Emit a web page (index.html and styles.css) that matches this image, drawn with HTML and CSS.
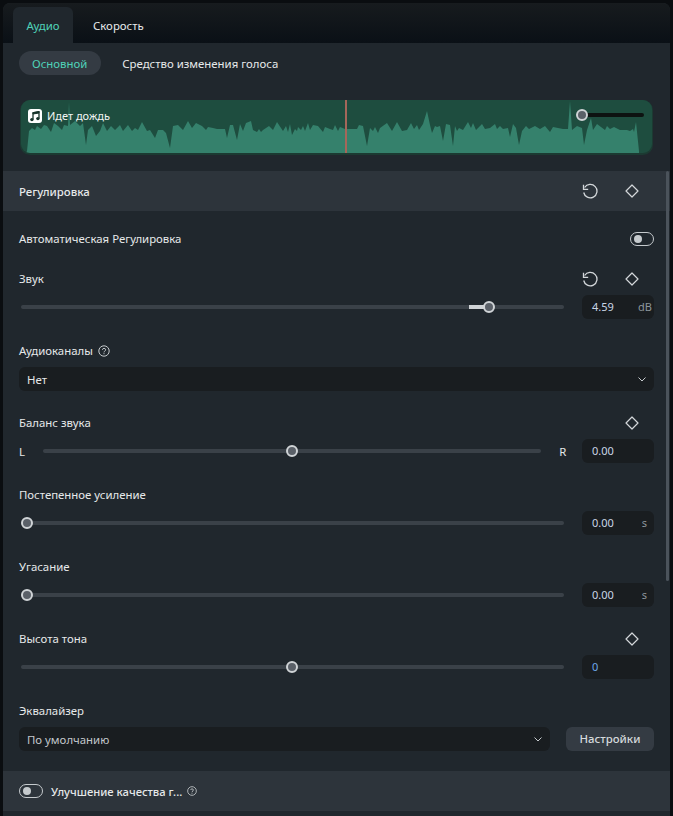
FILE: index.html
```html
<!DOCTYPE html>
<html>
	<head>
		<meta charset="UTF-8">
		<title>Аудио</title>
		<link rel="stylesheet" href="styles.css">
	</head>
	<body>
		<svg class="sprites" width="0" height="0">
			<symbol id="reset" viewBox="0 0 16 16">
				<path d="M2.6 4.5A6.7 6.7 0 1 1 1.7 9.5" fill="none" stroke="currentColor" stroke-width="1.3"/>
				<path d="M1.5 1.8V6.3H6.2" fill="none" stroke="currentColor" stroke-width="1.3"/>
			</symbol>
			<symbol id="key" viewBox="0 0 14 14">
				<path d="M7 1 13 7 7 13 1 7Z" fill="none" stroke="currentColor" stroke-width="1.2" stroke-linejoin="round"/>
			</symbol>
			<symbol id="help" viewBox="0 0 12 12">
				<circle cx="6" cy="6" r="5.2" fill="none" stroke="currentColor"/>
				<path d="M4.4 4.8C4.4 2.9 7.7 2.9 7.7 4.8 7.7 6 6 6 6 7.4" fill="none" stroke="currentColor"/>
				<rect x="5.5" y="8.2" width="1" height="1" fill="currentColor"/>
			</symbol>
			<symbol id="chev" viewBox="0 0 8 5">
				<path d="M.5 .5 4 4 7.5 .5" fill="none" stroke="currentColor"/>
			</symbol>
		</svg>

		<div class="panel">
			<div class="tabs">
				<a class="tab active">Аудио</a>
				<a class="tab">Скорость</a>
			</div>
			<div class="subtabs">
				<a class="pill active">Основной</a>
				<a class="pill">Средство изменения голоса</a>
			</div>

			<div class="clip">
				<svg class="wave" viewBox="0 0 631 53" preserveAspectRatio="none">
					<path fill="#35816c" d="M5 53 6 51 8 31 11 28 14 30 16 26 20 29 23 25 26 26 30 32 33 23 37 26 41 30 43 25 47 26 48 2 49 25 54 21 59 26 62 23 65 45 67 30 71 26 75 36 79 31 82 23 86 31 90 26 94 30 99 25 102 31 107 25 111 31 114 28 117 30 121 22 126 31 129 30 134 38 137 30 142 30 145 33 149 48 152 26 157 25 162 30 167 21 171 28 175 23 181 26 185 30 187 27 192 28 196 29 204 29 206 38 209 25 212 25 216 40 219 24 222 31 225 23 230 21 232 30 236 32 238 29 240 32 242 30 248 26 252 30 256 22 262 31 265 26 267 32 269 24 271 35 274 29 276 31 277 27 280 30 282 26 284 31 287 23 289 30 292 25 297 26 302 32 304 27 309 29 312 30 314 25 317 31 319 27 324 29 336 29 338 25 342 26 346 46 349 28 352 31 354 27 357 33 359 28 366 23 371 31 376 22 381 31 386 30 390 23 393 29 396 25 398 30 402 24 406 11 409 25 411 33 414 26 416 27 419 26 422 41 425 24 429 25 432 46 434 26 436 31 438 28 442 30 447 22 450 28 452 23 455 30 461 24 464 29 469 28 474 24 476 29 479 26 482 29 487 28 489 37 492 24 495 28 498 45 501 31 505 26 508 29 514 26 519 29 524 26 529 32 532 27 542 29 547 29 549 1 551 30 556 26 561 28 563 45 566 30 570 18 572 30 576 24 580 27 584 30 586 26 589 29 593 27 599 30 606 30 609 31 612 29 613 32 615 22 618 51 618 53 Z"/>
				</svg>
				<div class="clip-name">
					<svg class="note" viewBox="0 0 14 14">
						<rect width="14" height="14" rx="3" fill="#fff"/>
						<path d="M5 10.5V3.8L11 2.8V9.5" fill="none" stroke="#16332a" stroke-width="1.3"/>
						<path d="M5 5V3.6L11 2.6V4Z" fill="#16332a" stroke="#16332a"/>
						<circle cx="3.9" cy="10.6" r="1.7" fill="#16332a"/>
						<circle cx="9.9" cy="9.6" r="1.7" fill="#16332a"/>
					</svg>
					Идет дождь
				</div>
				<div class="playhead"></div>
				<div class="volume"><span class="knob"></span></div>
			</div>

			<div class="scroller"></div>

			<div class="section-head">
				<span class="head-title">Регулировка</span>
				<span class="icons">
					<svg class="ico"><use href="#reset"/></svg>
					<svg class="ico-key"><use href="#key"/></svg>
				</span>
			</div>

			<div class="body">
				<div class="row auto">
					<span class="auto-label">Автоматическая Регулировка</span>
					<span class="toggle"></span>
				</div>

				<div class="row label-row sound">
					<span>Звук</span>
					<span class="icons">
						<svg class="ico"><use href="#reset"/></svg>
						<svg class="ico-key"><use href="#key"/></svg>
					</span>
				</div>
				<div class="row control">
					<div class="slider"><span class="fill"></span><span class="knob" style="left:86.2%"></span></div>
					<div class="num"><b>4.59</b><i>dB</i></div>
				</div>

				<div class="label-row channels">
					<span>Аудиоканалы</span>
					<svg class="help"><use href="#help"/></svg>
				</div>
				<div class="select">Нет<svg class="chev"><use href="#chev"/></svg></div>

				<div class="row label-row balance">
					<span>Баланс звука</span>
					<span class="icons"><svg class="ico-key"><use href="#key"/></svg></span>
				</div>
				<div class="row control">
					<span class="lr">L</span>
					<div class="slider short"><span class="knob" style="left:50%"></span></div>
					<span class="lr r">R</span>
					<div class="num"><b>0.00</b></div>
				</div>

				<div class="label-row fade">Постепенное усиление</div>
				<div class="row control">
					<div class="slider"><span class="knob" style="left:1.1%"></span></div>
					<div class="num"><b>0.00</b><i class="sec">s</i></div>
				</div>

				<div class="label-row fade">Угасание</div>
				<div class="row control">
					<div class="slider"><span class="knob" style="left:1.1%"></span></div>
					<div class="num"><b>0.00</b><i class="sec">s</i></div>
				</div>

				<div class="row label-row pitch">
					<span>Высота тона</span>
					<span class="icons"><svg class="ico-key"><use href="#key"/></svg></span>
				</div>
				<div class="row control">
					<div class="slider"><span class="knob" style="left:49.9%"></span></div>
					<div class="num"><b class="blue">0</b></div>
				</div>

				<div class="label-row eq">Эквалайзер</div>
				<div class="row eq-row">
					<div class="select grow dim">По умолчанию<svg class="chev"><use href="#chev"/></svg></div>
					<a class="btn">Настройки</a>
				</div>
			</div>

			<div class="section-head foot">
				<span class="toggle"></span>
				<span class="head-title">Улучшение качества г...</span>
				<svg class="help"><use href="#help"/></svg>
			</div>
		</div>
	</body>
</html>
```

FILE: styles.css
```css
html,body,div,span,a,b,i {
	margin: 0;
	padding: 0;
}
body {
	width: 673px;
	height: 816px;
	overflow: hidden;
	background-color: #0a0d10;
	font-family: "Noto Sans", "Open Sans", sans-serif;
	font-size: 11.4px;
	color: #e6e9ea;
}
b,i {
	font-weight: normal;
	font-style: normal;
}
.sprites {
	display: block;
	height: 0;
}
.panel {
	position: relative;
	width: 667px;
	height: 813px;
	margin: 3px 0 0 3px;
	background-color: #20272d;
	border-radius: 7px 7px 0 0;
	overflow: hidden;
}

.tabs {
	display: flex;
	height: 40px;
	padding-left: 10px;
	box-sizing: border-box;
	align-items: flex-end;
	background: linear-gradient(#171b1e, #0a1016);
}
.tab {
	width: 60px;
	height: 36px;
	line-height: 38px;
	text-align: center;
	border-radius: 6px 6px 0 0;
}
.tab + .tab {
	width: 72px;
	margin-left: 10px;
	text-align: left;
	padding-left: 10px;
}
.tab.active {
	background-color: #20272d;
	color: #4fd3b8;
}

.subtabs {
	display: flex;
	padding: 8px 0 0 16px;
	height: 24px;
}
.pill {
	height: 24px;
	line-height: 26px;
	padding: 0 14px 0 13px;
	border-radius: 12px;
	margin-right: 8px;
}
.pill.active {
	background-color: #343b43;
	color: #4fd3b8;
}

.clip {
	position: relative;
	width: 631px;
	height: 53px;
	margin: 25px 0 0 18px;
	background-color: #1e4d3f;
	border-radius: 9px;
	box-shadow: 0 1px 0 1px #1c3a32;
	overflow: hidden;
}
.wave {
	display: block;
	width: 631px;
	height: 53px;
}
.clip-name {
	position: absolute;
	left: 7px;
	top: 8px;
	display: flex;
	align-items: center;
	font-size: 11px;
	color: #f2f5f4;
}
.note {
	width: 14px;
	height: 14px;
	margin-right: 5px;
}
.playhead {
	position: absolute;
	left: 324px;
	top: 0;
	width: 2px;
	height: 53px;
	background-color: #a4675a;
}
.volume {
	position: absolute;
	left: 561px;
	top: 13px;
	width: 62px;
	height: 4px;
	background-color: #0d1211;
	border-radius: 2px;
}
.volume .knob {
	left: 0;
}

.scroller {
	position: absolute;
	left: 663px;
	top: 168px;
	width: 3px;
	height: 410px;
	background-color: #4b535b;
	border-radius: 2px;
	z-index: 2;
}

.section-head {
	display: flex;
	align-items: center;
	height: 40px;
	margin-top: 18px;
	padding: 0 16px;
	background-color: #2d343b;
}
.head-title {
	flex: 1;
	font-weight: 500;
}
.icons {
	display: flex;
	align-items: center;
	color: #d3d7da;
}
.ico {
	width: 16px;
	height: 16px;
	margin-right: 27px;
}
.ico-key {
	width: 14px;
	height: 14px;
	margin-right: 6px;
}
.section-head .icons {
	margin-right: 9px;
}

.body {
	height: 542px;
	padding: 18px 16px 0;
}
.row {
	display: flex;
	align-items: center;
	justify-content: space-between;
}
.auto {
	height: 20px;
}
.auto-label {
	padding-bottom: 2px;
}
.toggle {
	position: relative;
	display: block;
	box-sizing: border-box;
	width: 24px;
	height: 14px;
	border: 1px solid #c5cacd;
	border-radius: 7px;
}
.toggle:before {
	content: "";
	position: absolute;
	left: 3px;
	top: 2px;
	width: 8px;
	height: 8px;
	border-radius: 50%;
	background-color: #c5cacd;
}
.label-row {
	height: 20px;
	line-height: 20px;
}
.sound {
	margin-top: 20px;
}
.sound .icons,.balance .icons,.pitch .icons {
	margin-right: 9px;
}
.control {
	height: 24px;
	margin-top: 6px;
}
.slider {
	position: relative;
	flex: none;
	width: 543px;
	height: 4px;
	margin-left: 2px;
	background-color: #3a4148;
	border-radius: 2px;
}
.slider.short {
	width: 498px;
	margin-left: 0;
}
.fill {
	position: absolute;
	left: 82.5%;
	width: 3.7%;
	height: 4px;
	background-color: #cfd3d6;
}
.knob {
	position: absolute;
	top: -4px;
	box-sizing: border-box;
	width: 12px;
	height: 12px;
	margin-left: -6px;
	border: 2px solid #cfd3d6;
	border-radius: 50%;
	background-color: #5a6068;
}
.num {
	display: flex;
	justify-content: space-between;
	box-sizing: border-box;
	width: 72px;
	height: 24px;
	line-height: 24px;
	padding: 0 2px 0 10px;
	background-color: #191d20;
	border-radius: 6px;
	font-size: 11px;
	color: #a9b2b8;
}
.num b {
	color: #c9d6e6;
}
.num b.blue {
	color: #6fa8ea;
}
.num i {
	color: #8d959b;
}
.num i.sec {
	padding-right: 5px;
}
.lr {
	width: 6px;
}
.lr.r {
	margin-left: 1px;
	margin-right: -1px;
}
.channels {
	display: flex;
	align-items: center;
	margin-top: 22px;
}
.help {
	width: 12px;
	height: 12px;
	margin-left: 5px;
	color: #c5cacd;
}
.select {
	display: flex;
	align-items: center;
	justify-content: space-between;
	height: 24px;
	margin-top: 6px;
	padding: 0 8px;
	background-color: #191d20;
	border-radius: 6px;
}
.chev {
	width: 8px;
	height: 5px;
	color: #c5cacd;
}
.select.grow {
	width: 515px;
	margin-top: 0;
}
.dim {
	color: #c2c7cb;
}
.balance {
	margin-top: 22px;
}
.fade {
	margin-top: 22px;
}
.pitch {
	margin-top: 22px;
}
.eq {
	margin-top: 22px;
}
.eq-row {
	margin-top: 6px;
}
.btn {
	width: 88px;
	line-height: 24px;
	text-align: center;
	background-color: #343b43;
	border-radius: 6px;
	font-weight: 500;
	color: #d5d9dc;
}
.foot {
	margin-top: 0;
}
.foot .head-title {
	flex: none;
	margin-left: 8px;
	font-size: 11.2px;
}
.foot .help {
	width: 10px;
	height: 10px;
	margin-left: 5px;
}
```
